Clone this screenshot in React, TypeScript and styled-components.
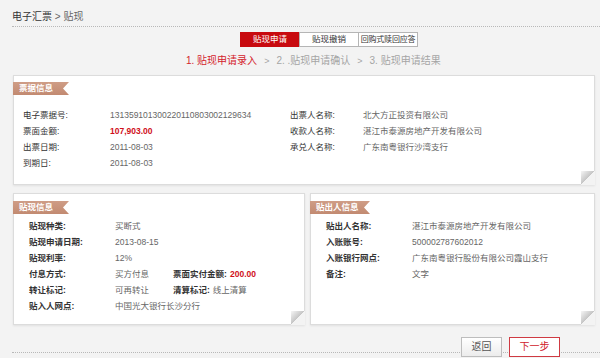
import styled, { createGlobalStyle } from "styled-components";

const GlobalStyle = createGlobalStyle`
  html, body {
    margin: 0;
    padding: 0;
    background: #f3f3f3;
  }
  body {
    font-family: "Liberation Sans", "Noto Sans CJK SC", sans-serif;
    color: #333;
  }
`;

const Page = styled.div`
  width: 600px;
  height: 358px;
  overflow: hidden;
  padding: 0 5px 0 13px;
  box-sizing: border-box;
`;

const Breadcrumb = styled.div`
  height: 27px;
  box-sizing: border-box;
  padding-top: 11px;
  margin-left: -1px;
  margin-right: -5px;
  font-size: 10px;
  line-height: 12px;
  color: #333;
  border-bottom: 1px dotted #b8b8b8;
`;

const Crumb = styled.span<{ $muted?: boolean }>`
  color: ${(p) => (p.$muted ? "#666" : "#333")};
`;

const Tabs = styled.div`
  display: flex;
  margin: 5px 0 0 228px;
  height: 15px;
`;

const Tab = styled.div<{ $active?: boolean; $tight?: boolean }>`
  position: relative;
  width: 60px;
  box-sizing: border-box;
  border: 1px solid ${(p) => (p.$active ? "#c80a0f" : "#b5b5b5")};
  margin-left: -1px;
  background: ${(p) => (p.$active ? "#c80a0f" : "#fff")};
  color: ${(p) => (p.$active ? "#fff" : "#333")};
  font-size: ${(p) => (p.$tight ? "8px" : "8.5px")};
  letter-spacing: ${(p) => (p.$tight ? "-0.2px" : "0")};
  line-height: 13px;
  text-align: center;
  white-space: nowrap;
  overflow: hidden;

  &::after {
    content: "";
    display: ${(p) => (p.$active ? "block" : "none")};
    position: absolute;
    left: 50%;
    bottom: -4px;
    margin-left: -3px;
    border-left: 3px solid transparent;
    border-right: 3px solid transparent;
    border-top: 3px solid #c80a0f;
  }
`;

const TabPointer = styled.div`
  position: relative;
`;

const Steps = styled.div`
  display: flex;
  align-items: center;
  margin: 8px 0 0 173px;
  height: 12px;
  font-size: 10px;
  line-height: 12px;
  color: #a5a5a5;
  white-space: nowrap;
`;

const Step = styled.span<{ $current?: boolean }>`
  color: ${(p) => (p.$current ? "#d3222b" : "#a5a5a5")};
`;

const StepSep = styled.span`
  margin: 0 7px;
  font-size: 9px;
`;

const Panel = styled.section<{ $height: number }>`
  position: relative;
  box-sizing: border-box;
  height: ${(p) => p.$height}px;
  background: #fff;
  border: 1px solid #dcdcdc;
  box-shadow: 0 1px 2px rgba(0, 0, 0, 0.08);

  &::after {
    content: "";
    position: absolute;
    right: -1px;
    bottom: -1px;
    width: 14px;
    height: 14px;
    background: linear-gradient(315deg, #f3f3f3 50%, #c4c4c4 51%, #f6f6f6 100%);
  }
`;

const TopPanel = styled(Panel)`
  margin-top: 8px;
`;

const PanelRow = styled.div`
  display: flex;
  gap: 5px;
  margin-top: 8px;
`;

const SidePanel = styled(Panel)<{ $width: number }>`
  width: ${(p) => p.$width}px;
  flex: none;
`;

const Ribbon = styled.div<{ $width: number; $top: number }>`
  width: ${(p) => p.$width}px;
  height: 13px;
  margin: ${(p) => p.$top}px 0 0 -1px;
  padding-left: 6px;
  box-sizing: border-box;
  background: linear-gradient(#cf9d86, #c28a71);
  clip-path: polygon(0 0, 100% 0, calc(100% - 6px) 50%, 100% 100%, 0 100%);
  color: #fff;
  font-size: 8.5px;
  font-weight: bold;
  line-height: 13px;
  white-space: nowrap;
`;

const InfoGrid = styled.div<{ $cols: string; $left: number; $top: number }>`
  display: grid;
  grid-template-columns: ${(p) => p.$cols};
  grid-auto-rows: 16px;
  align-items: center;
  padding: ${(p) => p.$top}px 0 0 ${(p) => p.$left}px;
  font-size: 8.5px;
  line-height: 12px;
  white-space: nowrap;
`;

const Label = styled.span<{ $bold?: boolean }>`
  color: #333;
  font-weight: ${(p) => (p.$bold ? "bold" : "normal")};
`;

const Value = styled.span<{ $red?: boolean }>`
  color: ${(p) => (p.$red ? "#d0101a" : "#666")};
  font-weight: ${(p) => (p.$red ? "bold" : "normal")};
`;

const Inline = styled.span`
  display: flex;
  gap: 3px;
`;

const Footer = styled.div`
  display: flex;
  justify-content: flex-end;
  gap: 7px;
  margin: 12px -5px 0 -1px;
  padding-right: 40px;
  height: 15px;
  border-bottom: 1px dotted #b8b8b8;
`;

const Button = styled.div<{ $primary?: boolean }>`
  width: ${(p) => (p.$primary ? 51 : 41)}px;
  height: 20px;
  box-sizing: border-box;
  border: 1px solid ${(p) => (p.$primary ? "#cf3a42" : "#bdbdbd")};
  background: ${(p) => (p.$primary ? "#fff" : "linear-gradient(#ffffff, #ececec)")};
  color: ${(p) => (p.$primary ? "#d0202a" : "#555")};
  font-size: 10px;
  line-height: 18px;
  text-align: center;
`;

export default function App() {
  return (
    <Page>
      <GlobalStyle />
      <Breadcrumb>
        <Crumb>电子汇票</Crumb> <Crumb $muted>&gt; 贴现</Crumb>
      </Breadcrumb>

      <Tabs>
        <TabPointer>
          <Tab $active>贴现申请</Tab>
        </TabPointer>
        <Tab>贴现撤销</Tab>
        <Tab $tight>回购式赎回应答</Tab>
      </Tabs>

      <Steps>
        <Step $current>1. 贴现申请录入</Step>
        <StepSep>&gt;</StepSep>
        <Step>2. .贴现申请确认</Step>
        <StepSep>&gt;</StepSep>
        <Step>3. 贴现申请结果</Step>
      </Steps>

      <TopPanel $height={110}>
        <Ribbon $width={56} $top={6}>票据信息</Ribbon>
        <InfoGrid $cols="87px 180px 73px 1fr" $left={9} $top={12}>
          <Label>电子票据号:</Label>
          <Value>131359101300220110803002129634</Value>
          <Label>出票人名称:</Label>
          <Value>北大方正投资有限公司</Value>

          <Label>票面金额:</Label>
          <Value $red>107,903.00</Value>
          <Label>收款人名称:</Label>
          <Value>湛江市泰源房地产开发有限公司</Value>

          <Label>出票日期:</Label>
          <Value>2011-08-03</Value>
          <Label>承兑人名称:</Label>
          <Value>广东南粤银行沙湾支行</Value>

          <Label>到期日:</Label>
          <Value>2011-08-03</Value>
        </InfoGrid>
      </TopPanel>

      <PanelRow>
        <SidePanel $height={132} $width={292}>
          <Ribbon $width={56} $top={7}>贴现信息</Ribbon>
          <InfoGrid $cols="86px 58px 57px 1fr" $left={15} $top={4}>
            <Label $bold>贴现种类:</Label>
            <Value>买断式</Value>
            <span />
            <span />

            <Label $bold>贴现申请日期:</Label>
            <Value>2013-08-15</Value>
            <span />
            <span />

            <Label $bold>贴现利率:</Label>
            <Value>12%</Value>
            <span />
            <span />

            <Label $bold>付息方式:</Label>
            <Value>买方付息</Value>
            <Label $bold>票面实付金额:</Label>
            <Value $red>200.00</Value>

            <Label $bold>转让标记:</Label>
            <Value>可再转让</Value>
            <Inline>
              <Label $bold>清算标记:</Label>
              <Value>线上清算</Value>
            </Inline>
            <span />

            <Label $bold>贴入人网点:</Label>
            <Value>中国光大银行长沙分行</Value>
          </InfoGrid>
        </SidePanel>

        <SidePanel $height={132} $width={285}>
          <Ribbon $width={60} $top={7}>贴出人信息</Ribbon>
          <InfoGrid $cols="86px 1fr" $left={15} $top={4}>
            <Label $bold>贴出人名称:</Label>
            <Value>湛江市泰源房地产开发有限公司</Value>
            <Label $bold>入账账号:</Label>
            <Value>500002787602012</Value>
            <Label $bold>入账银行网点:</Label>
            <Value>广东南粤银行股份有限公司霞山支行</Value>
            <Label $bold>备注:</Label>
            <Value>文字</Value>
          </InfoGrid>
        </SidePanel>
      </PanelRow>

      <Footer>
        <Button>返回</Button>
        <Button $primary>下一步</Button>
      </Footer>
    </Page>
  );
}
